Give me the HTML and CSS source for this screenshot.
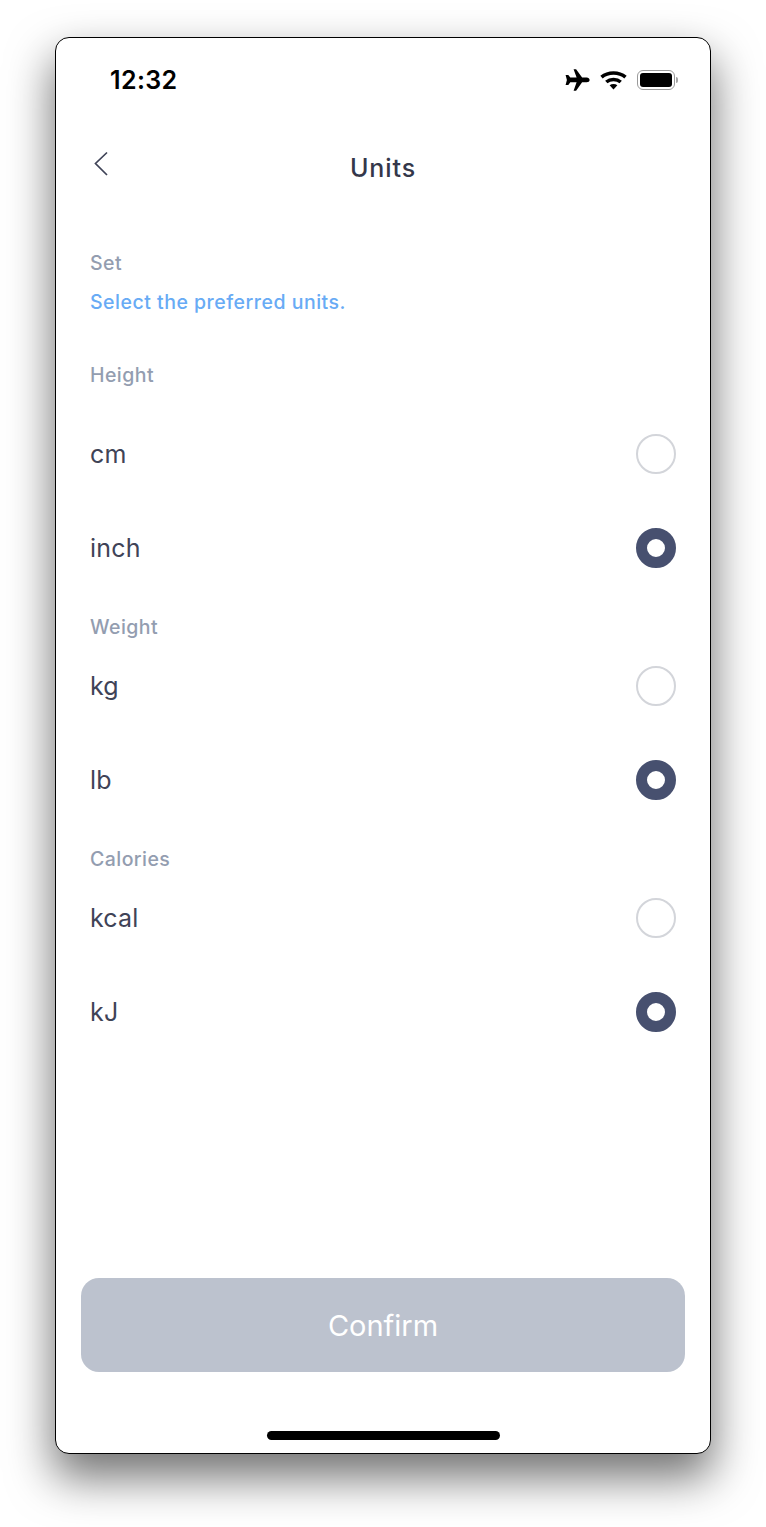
FILE: index.html
```html
<!DOCTYPE html>
<html lang="en">
<head>
    <meta charset="UTF-8">
    <meta name="viewport" content="width=device-width, initial-scale=1.0">
    <title>Units</title>
    <link rel="stylesheet" href="styles.css">
</head>
<body>
    <div class="phone">
        <!-- Status bar -->
        <div class="status-bar">
            <span class="time">12:32</span>
            <div class="status-icons">
                <svg class="icon-plane" width="26" height="24" viewBox="0 0 26 24">
                    <path fill="#000" d="M9.6 1.2h2.5l6 8.4h4.6c1.6 0 2.9 1 2.9 2.3s-1.3 2.3-2.9 2.3h-4.6l-6 8.6H9.6l3-8.6H6.3l-2 2.7H1.6l1.3-5-1.3-4.9h2.7l2 2.6h6.3z"/>
                </svg>
                <svg class="icon-wifi" width="27" height="20" viewBox="0 0 27 20">
                    <path fill="none" stroke="#000" stroke-width="3.6" d="M1.500 7.200c6.600-5.600 17.400-5.600 24 0"/>
                    <path fill="none" stroke="#000" stroke-width="3.6" d="M6.300 12c4-3.400 10.400-3.400 14.400 0"/>
                    <path fill="#000" d="M9.6 15.2c2.300-1.700 5.500-1.700 7.800 0l-3.900 4.300z"/>
                </svg>
                <div class="battery">
                    <div class="battery-body"><div class="battery-level"></div></div>
                    <div class="battery-tip"></div>
                </div>
            </div>
        </div>

        <!-- Header -->
        <div class="header">
            <svg class="back" width="16" height="26" viewBox="0 0 16 26">
                <path fill="none" stroke="#3f4357" stroke-width="1.7" d="M14 1.500 2.500 12.500 14 24"/>
            </svg>
            <h1>Units</h1>
        </div>

        <!-- Content -->
        <div class="content">
            <div class="label">Set</div>
            <div class="hint">Select the preferred units.</div>

            <div class="label label-height">Height</div>
            <div class="row"><span>cm</span><span class="radio"></span></div>
            <div class="row"><span>inch</span><span class="radio checked"></span></div>

            <div class="label label-group">Weight</div>
            <div class="row"><span>kg</span><span class="radio"></span></div>
            <div class="row"><span>lb</span><span class="radio checked"></span></div>

            <div class="label label-group">Calories</div>
            <div class="row"><span>kcal</span><span class="radio"></span></div>
            <div class="row"><span>kJ</span><span class="radio checked"></span></div>
        </div>

        <button class="confirm">Confirm</button>
        <div class="home-bar"></div>
    </div>
</body>
</html>
```

FILE: styles.css
```css
* {
    box-sizing: border-box;
}

html, body {
    margin: 0;
    padding: 0;
    background-color: #fff;
}

body {
    width: 766px;
    height: 1527px;
    padding: 37px 55px 0;
    font-family: Inter, "Liberation Sans", sans-serif;
    overflow: hidden;
}

.phone {
    width: 656px;
    height: 1417px;
    background-color: #fff;
    border: 1px solid #000;
    border-radius: 14px;
    box-shadow: 0 22px 45px 2px rgba(0, 0, 0, 0.55);
    display: flex;
    flex-direction: column;
    align-items: stretch;
}

/* Status bar */
.status-bar {
    height: 84px;
    padding: 0 32px 0 54px;
    display: flex;
    justify-content: space-between;
    align-items: center;
}

.time {
    font-size: 25px;
    font-weight: 600;
    letter-spacing: 0.4px;
    color: #000;
}

.status-icons {
    display: flex;
    align-items: center;
    gap: 10px;
}

.battery {
    display: flex;
    align-items: center;
    gap: 1px;
}

.battery-body {
    width: 38px;
    height: 20px;
    border: 1.5px solid #9a9a9a;
    border-radius: 6px;
    padding: 2px;
}

.battery-level {
    width: 100%;
    height: 100%;
    background-color: #000;
    border-radius: 3px;
}

.battery-tip {
    width: 2px;
    height: 6px;
    background-color: #a5a5a5;
    border-radius: 0 2px 2px 0;
}

/* Header */
.header {
    height: 92px;
    display: flex;
    justify-content: center;
    align-items: center;
    position: relative;
}

.header h1 {
    margin: 0;
    font-size: 25px;
    font-weight: 450;
    letter-spacing: 0.9px;
    color: #34374a;
}

.back {
    position: absolute;
    left: 37px;
    top: 29px;
}

/* Content */
.content {
    flex: 1;
    padding: 0 34px;
}

.label {
    height: 24px;
    line-height: 24px;
    font-size: 19.500px;
    font-weight: 450;
    letter-spacing: 0.45px;
    color: #939db0;
}

.content > .label:first-child {
    margin-top: 37px;
}

.hint {
    margin-top: 15px;
    height: 24px;
    line-height: 24px;
    font-size: 19.500px;
    font-weight: 450;
    letter-spacing: 0.5px;
    color: #68abf5;
}

.label-height {
    margin-top: 49px;
    margin-bottom: 20px;
}

.label-group {
    margin-top: 20px;
}

.row {
    height: 94px;
    display: flex;
    justify-content: space-between;
    align-items: center;
    font-size: 25px;
    letter-spacing: 0.2px;
    color: #3f4357;
}

.radio {
    width: 40px;
    height: 40px;
    border: 2.500px solid #d3d5da;
    border-radius: 50%;
}

.radio.checked {
    border: 11.500px solid #47506f;
    background-color: #fff;
}

/* Bottom */
.confirm {
    display: block;
    width: 604px;
    height: 94px;
    margin: -1px 25px 0;
    border: none;
    border-radius: 18px;
    background-color: #bcc2ce;
    color: #fff;
    font-family: inherit;
    font-size: 29px;
    font-weight: 400;
}

.home-bar {
    width: 233px;
    height: 9px;
    margin: 59px auto 13px;
    background-color: #000;
    border-radius: 5px;
}
```
